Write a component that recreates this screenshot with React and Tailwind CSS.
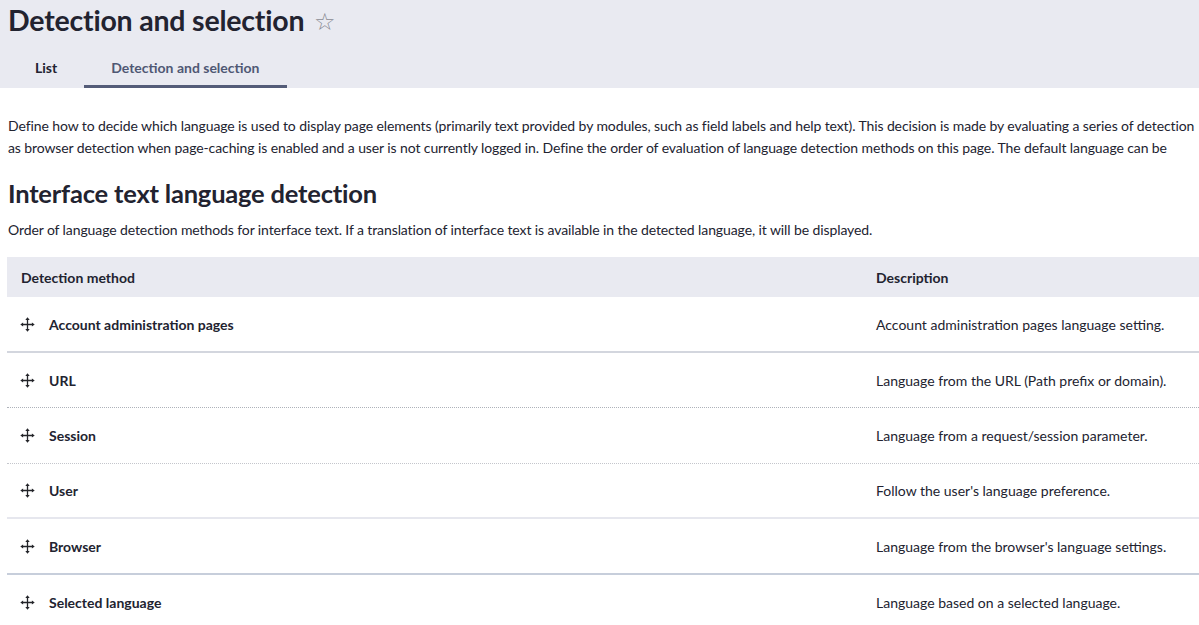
import React from "react";

function MoveIcon() {
  return (
    <svg width="15" height="15" viewBox="0 0 15 15" className="shrink-0">
      <path d="M7.5 2.5 V12.5 M2.5 7.5 H12.5" stroke="#232429" strokeWidth="1.3" fill="none" />
      <path d="M7.5 0.3 L5.3 3.1 H9.7 Z" fill="#232429" />
      <path d="M7.5 14.7 L5.3 11.9 H9.7 Z" fill="#232429" />
      <path d="M0.3 7.5 L3.1 5.5 V9.5 Z" fill="#232429" />
      <path d="M14.7 7.5 L11.9 5.5 V9.5 Z" fill="#232429" />
    </svg>
  );
}

const rows = [
  ["Account administration pages", "Account administration pages language setting.", "border-b-2 border-[#d3d6de]"],
  ["URL", "Language from the URL (Path prefix or domain).", "border-b border-dotted border-[#aeb2ba]"],
  ["Session", "Language from a request/session parameter.", "border-b border-dotted border-[#c4c6cc]"],
  ["User", "Follow the user's language preference.", "border-b-2 border-[#e6e7ee]"],
  ["Browser", "Language from the browser's language settings.", "border-b-2 border-[#c7cedb]"],
  ["Selected language", "Language based on a selected language.", ""],
];

export default function App() {
  return (
    <div
      className="w-[1199px] h-[625px] overflow-hidden bg-white text-[#222330]"
      style={{ fontFamily: "Lato, 'Noto Sans', sans-serif" }}
    >
      <div className="bg-[#e9eaf1] h-[88px] flex flex-col pl-2">
        <div className="flex items-center gap-[10px] h-[40px] pt-[1px]">
          <h1 className="text-[28.5px] font-bold leading-none tracking-[-0.2px] text-[#222330]">Detection and selection</h1>
          <span className="text-[24px] leading-none text-[#8a8b93]">☆</span>
        </div>
        <div className="flex mt-auto">
          <div className="px-[27px] h-[48px] pt-[7px] flex items-center text-[14px] font-bold text-[#222330]">List</div>
          <div className="px-[27px] h-[48px] pt-[10px] flex items-center text-[14px] font-bold text-[#4f5874] border-b-[3px] border-[#545c78]">
            Detection and selection
          </div>
        </div>
      </div>

      <div className="pl-2">
        <p className="mt-[27px] text-[14px] leading-[22px] whitespace-nowrap tracking-[-0.1px]">
          Define how to decide which language is used to display page elements (primarily text provided by modules, such as field labels and help text). This decision is made by evaluating a series of detection
          <br />
          as browser detection when page-caching is enabled and a user is not currently logged in. Define the order of evaluation of language detection methods on this page. The default language can be
        </p>
        <h2 className="mt-[18px] text-[25.5px] font-bold leading-[32px] tracking-[-0.2px]">Interface text language detection</h2>
        <p className="mt-[10px] text-[14px] leading-[22px] whitespace-nowrap tracking-[-0.1px]">
          Order of language detection methods for interface text. If a translation of interface text is available in the detected language, it will be displayed.
        </p>

        <div className="mt-[16px] ml-[-1px]">
          <div className="flex bg-[#e9eaf1] h-[40px] items-center text-[14px] font-bold">
            <div className="w-[855px] pl-[14px]">Detection method</div>
            <div className="pl-[14px]">Description</div>
          </div>
          {rows.map(([name, desc, border]) => (
            <div key={name} className={`flex h-[55.5px] pt-[1px] items-center text-[14px] ${border}`}>
              <div className="w-[855px] pl-[13px] flex items-center gap-[14px]">
                <MoveIcon />
                <span className="font-bold">{name}</span>
              </div>
              <div className="pl-[14px]">{desc}</div>
            </div>
          ))}
        </div>
      </div>
    </div>
  );
}
